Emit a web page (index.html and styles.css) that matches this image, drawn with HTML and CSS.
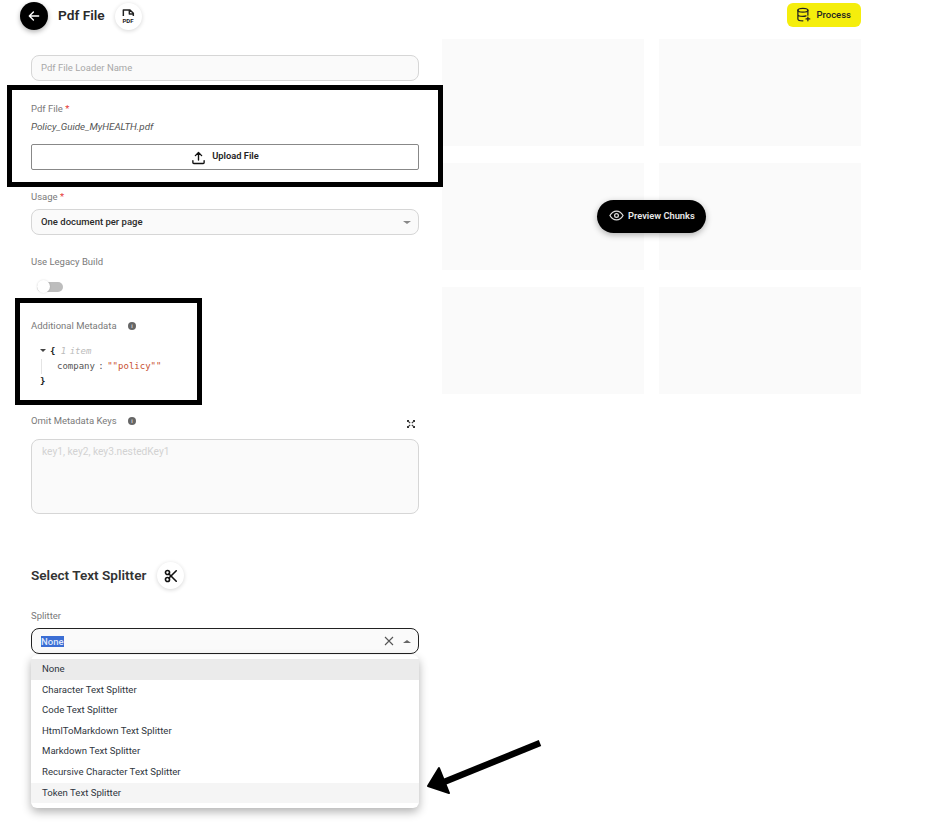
FILE: index.html
```html
<!DOCTYPE html>
<html lang="en">
<head>
  <meta charset="UTF-8">
  <meta name="viewport" content="width=device-width, initial-scale=1.0">
  <title>Pdf File</title>
  <link rel="stylesheet" href="styles.css">
</head>
<body>
  <header class="topbar">
    <div class="topbar-left">
      <button class="back-btn" aria-label="Back">
        <svg width="14" height="14" viewBox="0 0 24 24" fill="none" stroke="#fff" stroke-width="2.4" stroke-linecap="round" stroke-linejoin="round"><path d="M20 12H5M11 5l-7 7 7 7"/></svg>
      </button>
      <h1 class="page-title">Pdf File</h1>
      <span class="icon-badge">
        <svg width="16" height="16" viewBox="0 0 24 24" fill="none" stroke="#222" stroke-width="2.2" stroke-linejoin="round"><path d="M5 12V3h10l5 5v4M14 3v6h6"/><text x="12" y="22" text-anchor="middle" class="pdf-mark">PDF</text></svg>
      </span>
    </div>
    <button class="process-btn">
      <svg width="15" height="15" viewBox="0 0 24 24" fill="none" stroke="#222" stroke-width="2" stroke-linecap="round"><ellipse cx="11" cy="5" rx="8" ry="3"/><path d="M3 5v14c0 1.700 3.600 3 8 3M19 5v8M3 12c0 1.700 3.600 3 8 3 2 0 4-.3 5-.8"/><path d="M19 16v6M16 19h6"/></svg>
      Process
    </button>
  </header>

  <main class="content">
    <section class="form-col">
      <div class="input name-input">Pdf File Loader Name</div>

      <div class="label file-label">Pdf File <span class="req">*</span></div>
      <div class="file-name">Policy_Guide_MyHEALTH.pdf</div>
      <button class="upload-btn">
        <svg width="15" height="15" viewBox="0 0 24 24" fill="none" stroke="#111" stroke-width="2.200" stroke-linecap="round" stroke-linejoin="round"><path d="M12 16V4M7 9l5-5 5 5M3 17v3a1.500 1.500 0 0 0 1.500 1.500h15A1.500 1.500 0 0 0 21 20v-3"/></svg>
        Upload File
      </button>

      <div class="label usage-label">Usage <span class="req">*</span></div>
      <div class="input select-input">
        <span>One document per page</span>
        <span class="caret"></span>
      </div>

      <div class="label legacy-label">Use Legacy Build</div>
      <div class="toggle"><span class="toggle-knob"></span></div>

      <div class="label meta-label">Additional Metadata <span class="info">i</span></div>
      <div class="json-view">
        <div class="json-line"><span class="json-caret"></span><span class="json-brace">{</span> <span class="json-count">1 item</span></div>
        <div class="json-line json-prop"><span class="json-key">company</span> : <span class="json-str">""policy""</span></div>
        <div class="json-line json-end"><span class="json-brace">}</span></div>
      </div>

      <div class="omit-row">
        <div class="label">Omit Metadata Keys <span class="info">i</span></div>
        <svg class="expand-icon" width="8" height="8" viewBox="0 0 10 10" fill="none" stroke="#333" stroke-width="1.400"><path d="M1 1l3 3M9 1L6 4M1 9l3-3M9 9L6 6"/><path d="M.5 2.500v-2h2M7.500.5h2v2M.5 7.500v2h2M7.500 9.500h2v-2"/></svg>
      </div>
      <div class="input textarea-input">key1, key2, key3.nestedKey1</div>

      <div class="section-head">
        <h2 class="section-title">Select Text Splitter</h2>
        <span class="icon-badge">
          <svg width="14" height="14" viewBox="0 0 24 24" fill="none" stroke="#111" stroke-width="2.800" stroke-linecap="round"><circle cx="6" cy="6" r="3.500"/><circle cx="6" cy="18" r="3.500"/><path d="M8.500 8.500L21 21M8.500 15.500L21 3"/></svg>
        </span>
      </div>

      <div class="label splitter-label">Splitter</div>
      <div class="splitter-wrap">
        <div class="input select-input focused">
          <span class="selected-text">None</span>
          <span class="select-actions">
            <svg width="10" height="10" viewBox="0 0 10 10" stroke="#555" stroke-width="1.100"><path d="M1 1l8 8M9 1l-8 8"/></svg>
            <span class="caret caret-up"></span>
          </span>
        </div>
        <ul class="dropdown">
          <li class="opt opt-active">None</li>
          <li class="opt">Character Text Splitter</li>
          <li class="opt">Code Text Splitter</li>
          <li class="opt">HtmlToMarkdown Text Splitter</li>
          <li class="opt">Markdown Text Splitter</li>
          <li class="opt">Recursive Character Text Splitter</li>
          <li class="opt opt-hover">Token Text Splitter</li>
        </ul>
      </div>
    </section>

    <section class="preview-col">
      <div class="skeleton"></div>
      <div class="skeleton"></div>
      <div class="skeleton"></div>
      <div class="skeleton"></div>
      <div class="skeleton"></div>
      <div class="skeleton"></div>
      <button class="preview-btn">
        <svg width="15" height="15" viewBox="0 0 24 24" fill="none" stroke="#ddd" stroke-width="2"><path d="M1.500 12S5.500 5 12 5s10.500 7 10.500 7-4 7-10.500 7S1.500 12 1.500 12z"/><circle cx="12" cy="12" r="3"/></svg>
        Preview Chunks
      </button>
    </section>
  </main>

  <!-- annotations drawn on top of the screenshot -->
  <div class="mark mark-file"></div>
  <div class="mark mark-meta"></div>
  <svg class="mark-arrow" width="120" height="64" viewBox="0 0 120 64"><path d="M116 7L20 46" stroke="#000" stroke-width="6.500"/><path d="M4 50L15 32L25 57Z" fill="#000" stroke="#000" stroke-width="2" stroke-linejoin="round"/></svg>
</body>
</html>
```

FILE: styles.css
```css
* {
  box-sizing: border-box;
  margin: 0;
  padding: 0;
  font-family: 'Roboto', 'Liberation Sans', sans-serif;
}

body {
  position: relative;
  width: 944px;
  height: 824px;
  overflow: hidden;
  background-color: #fff;
  color: #222;
  font-size: 9.500px;
}

button {
  border: none;
  cursor: pointer;
}

.topbar {
  display: flex;
  justify-content: space-between;
  align-items: flex-start;
  padding: 2px 83px 0 20px;
  height: 39px;
}

.topbar-left {
  display: flex;
  align-items: center;
  height: 28px;
}

.back-btn {
  display: flex;
  align-items: center;
  justify-content: center;
  width: 28px;
  height: 28px;
  border-radius: 50%;
  background-color: #000;
  box-shadow: 0 2px 5px rgba(0, 0, 0, 0.3);
}

.page-title {
  margin: 0 10px;
  font-size: 13.700px;
  font-weight: 600;
  color: #2a2a2a;
  position: relative;
  top: -1px;
}

.icon-badge {
  display: flex;
  align-items: center;
  justify-content: center;
  width: 27px;
  height: 27px;
  border-radius: 50%;
  background-color: #fff;
  box-shadow: 0 1px 4px rgba(0, 0, 0, 0.16);
}

.pdf-mark {
  font-size: 9px;
  font-weight: 700;
  fill: #222;
  stroke: none;
}

.process-btn {
  display: flex;
  align-items: center;
  gap: 5px;
  height: 24px;
  margin-top: 1px;
  padding: 0 10px 2px 9px;
  border-radius: 6px;
  background-color: #f5ee0c;
  color: #222;
  font-size: 9.500px;
  font-weight: 500;
}

.content {
  display: flex;
  padding-left: 31px;
}

.form-col {
  width: 388px;
}

.preview-col {
  position: relative;
  display: grid;
  grid-template-columns: 202px 202px;
  grid-auto-rows: 107px;
  gap: 17px 15px;
  align-content: start;
  margin-left: 23px;
  width: 419px;
}

.skeleton {
  background-color: #fafafa;
}

.preview-btn {
  position: absolute;
  top: 161px;
  left: 155px;
  display: flex;
  align-items: center;
  gap: 4px;
  width: 109px;
  height: 33px;
  padding: 0 0 2px 12px;
  border-radius: 17px;
  background-color: #000;
  color: #e8e8e8;
  font-size: 9.300px;
  font-weight: 600;
  box-shadow: 0 2px 6px rgba(0, 0, 0, 0.3);
}

.input {
  height: 26px;
  margin-top: 16px;
  padding: 0 9px;
  border: 1px solid #d6d6d6;
  border-radius: 8px;
  background-color: #fafafa;
  line-height: 24px;
  font-size: 9.500px;
}

.name-input {
  color: #a8a8a8;
}

.label {
  height: 12px;
  line-height: 12px;
  color: #7a7a7a;
  font-size: 9.500px;
}

.req {
  color: #e53935;
}

.file-label {
  margin-top: 22px;
}

.file-name {
  margin-top: 6px;
  height: 12px;
  line-height: 12px;
  font-size: 9.800px;
  font-style: italic;
  color: #555;
}

.upload-btn {
  display: flex;
  align-items: center;
  justify-content: center;
  gap: 6px;
  width: 100%;
  height: 26px;
  margin-top: 11px;
  padding-bottom: 3px;
  border: 1px solid #888;
  border-radius: 2px;
  background-color: #fff;
  color: #222;
  font-size: 9.300px;
  font-weight: 600;
}

.upload-btn svg {
  margin-top: 3px;
}

.usage-label {
  margin-top: 21px;
}

.select-input {
  display: flex;
  justify-content: space-between;
  align-items: center;
  margin-top: 6px;
  color: #2a2a2a;
  font-weight: 500;
}

.caret {
  width: 0;
  height: 0;
  margin-right: -2px;
  border-left: 4px solid transparent;
  border-right: 4px solid transparent;
  border-top: 3px solid #888;
}

.caret-up {
  border-top: none;
  border-bottom: 3px solid #666;
}

.legacy-label {
  margin-top: 21px;
}

.toggle {
  position: relative;
  width: 26px;
  height: 10px;
  margin: 14px 0 0 6px;
  border-radius: 5px;
  background-color: #bdbdbd;
}

.toggle-knob {
  position: absolute;
  top: -2px;
  left: 0;
  width: 13px;
  height: 13px;
  border-radius: 50%;
  background-color: #fff;
  box-shadow: 0 0 2px rgba(0, 0, 0, 0.15);
}

.meta-label {
  margin-top: 28px;
}

.info {
  display: inline-block;
  width: 8px;
  height: 8px;
  margin-left: 9px;
  border-radius: 50%;
  background-color: #666;
  color: #fff;
  font-size: 6px;
  line-height: 8px;
  text-align: center;
  vertical-align: 1px;
}

.json-view {
  margin: 12px 0 0 9px;
  font-size: 9px;
  word-spacing: -2px;
}

.json-line {
  height: 15px;
  line-height: 15px;
  white-space: pre;
}

.json-view,
.json-view * {
  font-family: 'DejaVu Sans Mono', 'Liberation Mono', monospace;
}

.json-caret {
  display: inline-block;
  width: 0;
  height: 0;
  margin-right: 4px;
  vertical-align: 2px;
  border-left: 3px solid transparent;
  border-right: 3px solid transparent;
  border-top: 3px solid #444;
}

.json-brace {
  color: #222;
  font-weight: 700;
}

.json-count {
  margin-left: 2px;
  color: #bbb;
  font-style: italic;
}

.json-prop {
  margin-left: 1px;
  padding-left: 15px;
  border-left: 1px solid #e4e4e4;
  color: #555;
}

.json-key {
  color: #555;
}

.json-str {
  color: #c8502f;
}

.json-end {
  padding-left: 0;
}

.omit-row {
  display: flex;
  justify-content: space-between;
  align-items: flex-start;
  margin-top: 26px;
}

.expand-icon {
  margin: 5px 4px 0 0;
}

.textarea-input {
  height: 75px;
  margin-top: 11px;
  padding-left: 10px;
  font-size: 10.200px;
  color: #d2d2d2;
}

.section-head {
  display: flex;
  align-items: center;
  gap: 11px;
  margin-top: 48px;
}

.section-title {
  position: relative;
  top: -1px;
  font-size: 13.600px;
  font-weight: 600;
  color: #333;
}

.splitter-label {
  margin-top: 21px;
}

.splitter-wrap {
  position: relative;
}

.focused {
  border: 1px solid #222;
}

.selected-text {
  background-color: #3b6ed4;
  color: #dfe8fb;
  line-height: 11px;
}

.select-actions {
  display: flex;
  align-items: center;
  gap: 9px;
}

.dropdown {
  position: absolute;
  top: 27px;
  left: 0;
  width: 388px;
  height: 153px;
  padding: 4px 0;
  list-style: none;
  border-radius: 6px;
  background-color: #fff;
  box-shadow: 0 4px 10px rgba(0, 0, 0, 0.3);
}

.opt {
  height: 20.600px;
  padding-left: 11px;
  line-height: 20px;
  color: #2f3640;
  font-size: 9.600px;
}

.opt-active {
  background-color: #ebebeb;
}

.opt-hover {
  background-color: #f5f5f5;
}

.mark {
  position: absolute;
  border: 5px solid #000;
}

.mark-file {
  top: 85px;
  left: 7px;
  width: 436px;
  height: 102px;
}

.mark-meta {
  top: 298px;
  left: 15px;
  width: 187px;
  height: 107px;
}

.mark-arrow {
  position: absolute;
  top: 736px;
  left: 424px;
}
```
